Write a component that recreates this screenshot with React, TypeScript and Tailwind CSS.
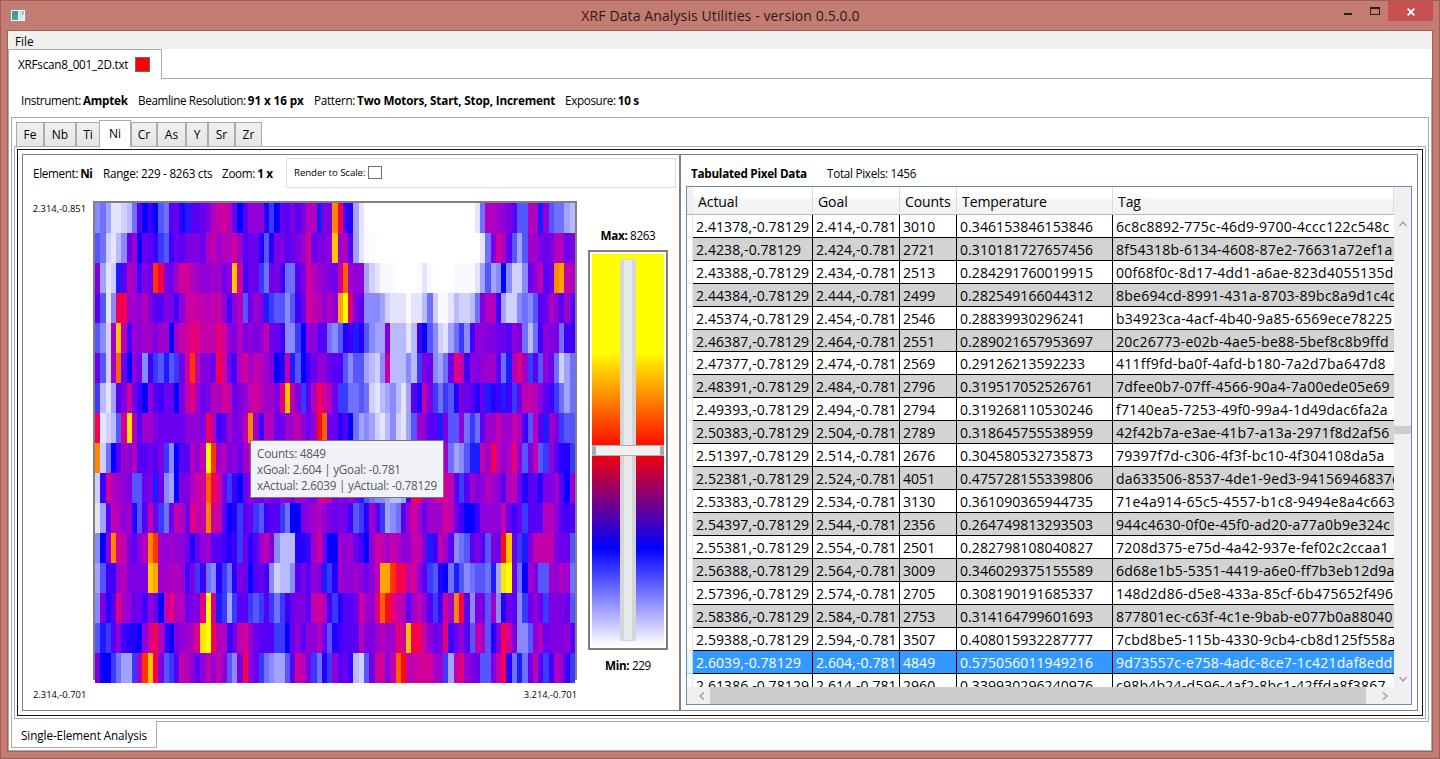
import React from "react";

const PALETTE: Record<string, string> = {
  "0": "#ffffff", "1": "#f9f9ff", "2": "#e4e4ff", "3": "#d0d0ff", "4": "#babaff",
  "5": "#a2a2ff", "6": "#8a8aff", "7": "#7070ff", "8": "#5656ff", "9": "#3a3aff",
  a: "#1c1cff", b: "#0400ff", c: "#2400ff", d: "#3e00fc", e: "#5600f6", f: "#6a00ee",
  g: "#7e00e2", h: "#9000d8", i: "#a000cc", j: "#b200bc", k: "#c200ac", l: "#d20098",
  m: "#e60078", n: "#f60050", o: "#ff0c10", p: "#ff3400", q: "#ff6000", r: "#ff8600",
  s: "#ffa400", t: "#ffc400", u: "#ffe400", v: "#ffff00",
};

/* One string per scan line, 91 pixels each, in groups of five. */
const SCAN = [
  "67522 347eb db87e fcaee fgjkl jfbeh hhc9b fegeg jjagg rndc5 20000 00000 00000 00000 0027j jihge 88jja h8775 4",
  "87324 6fibf ed98d feggg fjkij jlief fc8cg gefgi lfggh tije5 21100 00000 00000 00000 00027 glje8 58iig fgjjf g",
  "g523a ejidg fpngf illji hhiif htldf f97fg d77eg ljihg flqih h5321 11000 01210 00011 11258 56b63 36fhk efrsk j",
  "e826n niihj geegg dhklk kjkkh dhj8f iga98 868df lkjhj hsvmg e6665 32221 22473 11243 347gj jd533 6768e fjhei e",
  "863it kdihi igiib iklmm kkkml hgjgh ghkff d669b hhee7 68cda c8655 g4442 4db86 32579 6dhhg gffeh g747d hgg7d d",
  "f83iq fbhf6 d98a8 9flpk ggfnl fdjli kjigb cka8b dfhhf ee868 85436 k4446 49gf6 57fmk dhghi ie7aj mi9e8 hf735 7",
  "9425e glfdb hedff bgkmi fgjjl kfghk ljiig mtkg9 ejnlj f9977 87324 56425 eckg9 798cg fecfa cdad9 fkkjh ed975 7",
  "n2348 lujei igfff ffhhh gnjde iggkr idjjf fiikh fhoqf fceb7 56532 46325 8ihee ag88h 797ei ikiik jd8je aig98 8",
  "r37be ihjee feg96 beejh kvpij ghfik hgfhg ghigf hgihf ghgfh ighgf hghgi hghgf ki756 8aaki nkhjm h8gk8 9hecc 9",
  "3dlji hg88f gaf65 bggjk lqnlf 9dbfh gfhgf ihfjh gflmk ghgig a8766 5445d nniil llke9 eighj ihejk fceec ggieb i",
  "25ekj hic8e kf97f kjfmk krlke bc9ef 98dee 97bbg hijhg fgfd8 9cie9 567ei lifii ilkfd bbdhh hhkfd f9eee jjhed e",
  "6bhrl kgehj rpihi hhfcf hieed cd9fc eikg6 444cc dilfb bihif dbhlk ikjhh kkgad kie67 8ege8 gfotf 9agkk kkgff 8",
  "58ddi jgggg tsiij jidg9 d76c9 7cgfb efd63 446eg ehga9 cihhi hfhks spnnk lhe98 cb7a8 67887 a5uvf 7big8 8ihji 7",
  "6gcem ihffd hfbkm jjfgg mvla9 59ee9 89e97 9dfgg ekljd 9ceef lihmq omkje ikhe9 dlirn e6gg8 i6cfe 69fhf 9gggf 8",
  "8a9eh dccbh lnjdb ghijm uvnjj dfkli feee9 9bfhe hhjf8 cdeee jggij iimlt nnkhf gmdfh e8kj8 cgnlg 668hj fgggh e",
  "gbb97 559jp tng89 ekjhe hkhkh 86gnh f9765 58elj g97c9 hefd4 38fll gkqok kllli i95km hgf88 gknc7 a7fke 9djid 9",
].map((line) => line.replace(/ /g, "").split(""));

const ROWS: [string, string, string, string, string][] = [
  ["2.41378,-0.78129", "2.414,-0.781", "3010", "0.346153846153846", "6c8c8892-775c-46d9-9700-4ccc122c548c"],
  ["2.4238,-0.78129", "2.424,-0.781", "2721", "0.310181727657456", "8f54318b-6134-4608-87e2-76631a72ef1a"],
  ["2.43388,-0.78129", "2.434,-0.781", "2513", "0.284291760019915", "00f68f0c-8d17-4dd1-a6ae-823d4055135d"],
  ["2.44384,-0.78129", "2.444,-0.781", "2499", "0.282549166044312", "8be694cd-8991-431a-8703-89bc8a9d1c4d"],
  ["2.45374,-0.78129", "2.454,-0.781", "2546", "0.28839930296241", "b34923ca-4acf-4b40-9a85-6569ece78225"],
  ["2.46387,-0.78129", "2.464,-0.781", "2551", "0.289021657953697", "20c26773-e02b-4ae5-be88-5bef8c8b9ffd"],
  ["2.47377,-0.78129", "2.474,-0.781", "2569", "0.29126213592233", "411ff9fd-ba0f-4afd-b180-7a2d7ba647d8"],
  ["2.48391,-0.78129", "2.484,-0.781", "2796", "0.319517052526761", "7dfee0b7-07ff-4566-90a4-7a00ede05e69"],
  ["2.49393,-0.78129", "2.494,-0.781", "2794", "0.319268110530246", "f7140ea5-7253-49f0-99a4-1d49dac6fa2a"],
  ["2.50383,-0.78129", "2.504,-0.781", "2789", "0.318645755538959", "42f42b7a-e3ae-41b7-a13a-2971f8d2af56"],
  ["2.51397,-0.78129", "2.514,-0.781", "2676", "0.304580532735873", "79397f7d-c306-4f3f-bc10-4f304108da5a"],
  ["2.52381,-0.78129", "2.524,-0.781", "4051", "0.475728155339806", "da633506-8537-4de1-9ed3-94156946837c"],
  ["2.53383,-0.78129", "2.534,-0.781", "3130", "0.361090365944735", "71e4a914-65c5-4557-b1c8-9494e8a4c663"],
  ["2.54397,-0.78129", "2.544,-0.781", "2356", "0.264749813293503", "944c4630-0f0e-45f0-ad20-a77a0b9e324c"],
  ["2.55381,-0.78129", "2.554,-0.781", "2501", "0.282798108040827", "7208d375-e75d-4a42-937e-fef02c2ccaa1"],
  ["2.56388,-0.78129", "2.564,-0.781", "3009", "0.346029375155589", "6d68e1b5-5351-4419-a6e0-ff7b3eb12d9a"],
  ["2.57396,-0.78129", "2.574,-0.781", "2705", "0.308190191685337", "148d2d86-d5e8-433a-85cf-6b475652f496"],
  ["2.58386,-0.78129", "2.584,-0.781", "2753", "0.314164799601693", "877801ec-c63f-4c1e-9bab-e077b0a88040"],
  ["2.59388,-0.78129", "2.594,-0.781", "3507", "0.408015932287777", "7cbd8be5-115b-4330-9cb4-cb8d125f558a"],
  ["2.6039,-0.78129", "2.604,-0.781", "4849", "0.575056011949216", "9d73557c-e758-4adc-8ce7-1c421daf8edd"],
  ["2.61386,-0.78129", "2.614,-0.781", "2960", "0.339930296240976", "c98b4b24-d596-4af2-8bc1-42ffda8f3867"],
];

const COLUMNS = [
  { name: "Actual", width: "w-[120px]", spacing: "tracking-[0.1px]" },
  { name: "Goal", width: "w-[87px]", spacing: "tracking-[0.1px]" },
  { name: "Counts", width: "w-[57px]", spacing: "tracking-[0.05px]" },
  { name: "Temperature", width: "w-[156px]", spacing: "tracking-[0.08px]" },
  { name: "Tag", width: "w-[281px]", spacing: "tracking-[0.25px]" },
];

const ELEMENTS = [
  { name: "Fe", width: "w-[28px]" },
  { name: "Nb", width: "w-[32px]" },
  { name: "Ti", width: "w-[24px]" },
  { name: "Ni", width: "w-[32px]", selected: true },
  { name: "Cr", width: "w-[26px]" },
  { name: "As", width: "w-[29px]" },
  { name: "Y", width: "w-[22px]" },
  { name: "Sr", width: "w-[27px]" },
  { name: "Zr", width: "w-[27px]" },
];

function Field({ label, value, className = "", valueClass = "" }: { label: string; value: string; className?: string; valueClass?: string }) {
  return (
    <span className={"flex shrink-0 gap-[2px] whitespace-nowrap " + className}>
      <span>{label}</span>
      <b className={"font-bold " + valueClass}>{value}</b>
    </span>
  );
}

function TitleBar() {
  return (
    <header className="flex h-[29px] shrink-0 items-start">
      <svg className="ml-[9px] mt-[8px]" width="16" height="13" viewBox="0 0 16 13">
        <rect x="0.5" y="0.5" width="15" height="12" fill="#f4f6f6" stroke="#8f9496" />
        <rect x="2" y="2" width="6" height="9" fill="#4a8f9c" />
        <rect x="2" y="6" width="6" height="5" fill="#4fa08a" />
        <rect x="9" y="2" width="3" height="9" fill="#dcdcdc" />
        <rect x="12" y="2" width="2" height="4" fill="#8ec9d6" />
        <rect x="12" y="6" width="2" height="5" fill="#e8ecec" />
      </svg>
      <h1 className="flex-1 pl-[71px] pt-[5px] text-center text-[14px] leading-[20px] tracking-[0.11px] text-[#2a1a18]">
        XRF Data Analysis Utilities - version 0.5.0.0
      </h1>
      <svg className="mt-[6px]" width="44" height="12" viewBox="0 0 44 12">
        <rect x="0" y="6" width="8" height="2" fill="#222" />
        <path d="M26 0h10v8H26zM27 2v5h8V2z" fill="#222" fillRule="evenodd" />
      </svg>
      <div className="mr-[6px] flex h-[20px] w-[45px] items-center justify-center bg-[#c75050]">
        <svg className="mt-[2px]" width="8" height="8" viewBox="0 0 8 8">
          <path d="M0.7 0.7l6.6 6.6M7.3 0.7l-6.6 6.6" stroke="#fff" strokeWidth="1.8" />
        </svg>
      </div>
    </header>
  );
}

function HeatMap() {
  return (
    <div className="relative h-[482px] w-[484px] border-2 border-b-0 border-[#808080]">
      <div className="absolute bottom-0 left-[-2px] h-[3px] w-[2px] bg-white" />
      <div className="absolute bottom-0 right-[-2px] h-[3px] w-[2px] bg-white" />
      <svg width="480" height="480" viewBox="0 0 91 16" preserveAspectRatio="none" shapeRendering="crispEdges">
        {SCAN.map((line, y) =>
          line.map((c, x) => <rect key={x + "-" + y} x={x} y={y} width="1" height="1" fill={PALETTE[c]} />)
        )}
      </svg>
      <div className="absolute left-[155px] top-[237px] h-[58px] w-[194px] border border-[#767676] bg-[#f1f2f7] pl-[6px] pt-[4px] text-[11.7px] leading-[16px] tracking-[-0.22px] text-[#575757]">
        <p>Counts: 4849</p>
        <p>xGoal: 2.604 | yGoal: -0.781</p>
        <p>xActual: 2.6039 | yActual: -0.78129</p>
      </div>
    </div>
  );
}

function Legend() {
  return (
    <div className="ml-[11px] flex w-[80px] flex-col items-center pt-[26px] leading-[16px]">
      <p className="tracking-[-0.35px]"><b>Max:</b> 8263</p>
      <div className="mt-[7px] h-[400px] w-[80px] shrink-0 border-2 border-[#808080] p-[2px]">
        <div className="relative flex h-full justify-center bg-[linear-gradient(to_bottom,#ff0_0%,#ff0_25%,#f00_50%,#00f_75%,#fff_100%)] pb-[5px] pt-[5px]">
          <div className="w-[16px] border-x-4 border-y border-[#d6d6d6] bg-[#e7eaea]" />
          <div className="absolute left-0 top-[191px] h-[11px] w-full border-x-4 border-y border-[#acacac] bg-[#f0f0f0]" />
        </div>
      </div>
      <p className="mt-[7px] tracking-[-0.35px]"><b>Min:</b> 229</p>
    </div>
  );
}

function PixelMapPanel() {
  return (
    <section className="flex w-[656px] shrink-0 flex-col">
      <div className="flex h-[33px] items-center pl-[10px] pt-[3px]">
        <Field label="Element:" value="Ni" className="w-[70px] pt-px tracking-[-0.33px]" />
        <span className="w-[119px] shrink-0 pt-px tracking-[-0.26px]">Range: 229 - 8263 cts</span>
        <Field label="Zoom:" value="1 x" className="w-[64px] pt-px tracking-[-0.3px]" />
        <div className="flex h-[30px] w-[390px] items-center border border-[#dcdcdc] pl-[7px]">
          <span className="pt-px text-[9.6px] tracking-[-0.04px]">Render to Scale:</span>
          <span className="mb-px ml-[3px] h-[13px] w-[14px] border border-[#707070] bg-white" />
        </div>
      </div>
      <div className="mt-[13px] flex">
        <span className="ml-[3px] w-[60px] shrink-0 self-start whitespace-nowrap pt-[1px] text-right text-[9.4px] leading-[14px]">2.314,-0.851</span>
        <div className="ml-[7px]"><HeatMap /></div>
        <Legend />
      </div>
      <div className="flex w-[554px] justify-between pl-[10px] pt-[5px] text-[9.4px] leading-[14px]">
        <span>2.314,-0.701</span>
        <span>3.214,-0.701</span>
      </div>
    </section>
  );
}

function Chevron({ d, className = "" }: { d: string; className?: string }) {
  return (
    <svg className={className} width="8" height="8" viewBox="0 0 8 8" fill="none">
      <path d={d} stroke="#a0a0a0" strokeWidth="1.4" />
    </svg>
  );
}

function PixelTable() {
  return (
    <div className="flex h-[519px] w-[726px] flex-col border border-[#688caf] bg-white text-[14px]">
      <div className="flex h-[500px]">
        <div className="flex h-[500px] w-[707px] shrink-0 flex-col overflow-hidden">
          <div className="flex h-[28px] shrink-0 border-b border-[#b8b8b8] bg-[linear-gradient(to_bottom,#fff_0%,#fff_38%,#f5f6f8_42%,#f1f3f5_100%)]">
            <div className="w-[6px] shrink-0 bg-[#f0f0f0]" />
            {COLUMNS.map((c) => (
              <div key={c.name} className={c.width + " shrink-0 border-r border-[#dcdcdf] pl-[5px] leading-[29px] tracking-[-0.08px]"}>
                {c.name}
              </div>
            ))}
          </div>
          {ROWS.map((row, i) => {
            const tone = i === 19 ? "bg-[#3399ff] text-white" : i % 2 ? "bg-[#d3d3d3]" : "bg-white";
            return (
              <div key={row[4]} className={"flex shrink-0 " + (i === 5 ? "h-[22px]" : "h-[23px]")}>
                <div className={"w-[6px] shrink-0 border-b border-r " + (i === 19 ? "border-[#a8d8f8] bg-[#e8f5fd]" : "border-[#e4e4e4] bg-white")} />
                {row.map((cell, j) => (
                  <div
                    key={j}
                    className={[
                      COLUMNS[j].width,
                      COLUMNS[j].spacing,
                      tone,
                      j < 4 ? "border-r" : "",
                      "shrink-0 overflow-hidden whitespace-nowrap border-b border-black pl-[3px] leading-[23px]",
                    ].join(" ")}
                  >
                    {cell}
                  </div>
                ))}
              </div>
            );
          })}
        </div>
        <div className="flex w-[17px] flex-col items-center bg-[#f0f0f0] pt-[33px]">
          <Chevron d="M0.5 6l3.5-4 3.5 4" />
          <div className="mt-[198px] h-[8px] w-full bg-[#cdcdcd]" />
          <Chevron className="mt-[241px]" d="M0.5 2l3.5 4 3.5-4" />
        </div>
      </div>
      <div className="flex h-[17px] items-center bg-[#f0f0f0]">
        <Chevron className="ml-[11px]" d="M6 0.5l-4 3.5 4 3.5" />
        <div className="ml-[4px] h-full w-[656px] bg-[#cdcdcd]" />
        <Chevron className="ml-[15px]" d="M2 0.5l4 3.5-4 3.5" />
      </div>
    </div>
  );
}

function TablePanel() {
  return (
    <section className="flex flex-1 flex-col border-l-2 border-[#808080] pl-[5px]">
      <div className="flex h-[31px] items-center pl-[5px] pt-[7px]">
        <b className="w-[136px] tracking-[-0.26px]">Tabulated Pixel Data</b>
        <span className="tracking-[-0.28px]">Total Pixels: 1456</span>
      </div>
      <PixelTable />
    </section>
  );
}

export default function App() {
  return (
    <div className="flex h-[759px] w-[1440px] flex-col overflow-hidden border border-[#9b5f58] bg-[#c47b72] font-['Open_Sans','Noto_Sans',sans-serif] text-[11.7px] text-black">
      <TitleBar />
      <main className="mx-[6px] flex h-[722px] w-[1426px] flex-col border border-[#a0625b] bg-white">
        <nav className="h-[18px] shrink-0 bg-[#f0f0f0] pl-[7px] leading-[20px]">File</nav>
        <div className="relative z-10 -mb-px flex h-[30px] w-[154px] shrink-0 items-center border border-b-0 border-[#acacac] bg-white pl-[9px]">
          <span className="w-[117px] tracking-[-0.22px]">XRFscan8_001_2D.txt</span>
          <span className="mb-px h-[15px] w-[15px] border border-[#6b6b6b] bg-[#f00]" />
        </div>
        <div className="flex min-h-0 flex-1 flex-col border border-[#acacac] px-[2px]">
          <div className="flex h-[38px] shrink-0 items-center pl-[10px] pt-[5px]">
            <Field label="Instrument:" value="Amptek" className="w-[117px] tracking-[-0.36px]" valueClass="tracking-[-0.24px]" />
            <Field label="Beamline Resolution:" value="91 x 16 px" className="w-[176px] tracking-[-0.36px]" valueClass="tracking-[-0.08px]" />
            <Field label="Pattern:" value="Two Motors, Start, Stop, Increment" className="w-[251px] tracking-[-0.3px]" valueClass="tracking-[-0.17px]" />
            <Field label="Exposure:" value="10 s" className="tracking-[-0.35px]" />
          </div>
          <div className="flex h-[605px] shrink-0 flex-col border border-[#acacac] px-[2px]">
            <div className="relative z-10 -mb-px flex h-[29px] shrink-0 items-end pl-[2px] text-[12px]">
              {ELEMENTS.map((e) =>
                e.selected ? (
                  <div key={e.name} className={e.width + " -ml-px h-[27px] shrink-0 border border-b-0 border-[#acacac] bg-white text-center leading-[26px]"}>
                    {e.name}
                  </div>
                ) : (
                  <div key={e.name} className={e.width + " mb-px h-[24px] shrink-0 border border-b-0 border-[#acacac] bg-[linear-gradient(to_bottom,#f0f0f0,#e5e5e5)] text-center leading-[24px]"}>
                    {e.name}
                  </div>
                )
              )}
            </div>
            <div className="h-[573px] shrink-0 border border-[#acacac] p-[2px]">
              <div className="h-[567px] border border-[#141414] p-[4px]">
                <div className="flex h-[557px] border border-[#808080]">
                  <PixelMapPanel />
                  <TablePanel />
                </div>
              </div>
            </div>
          </div>
          <div className="relative z-10 -mt-px h-[27px] w-[146px] shrink-0 border border-t-0 border-[#acacac] bg-white pl-[9px] leading-[29px] tracking-[-0.08px]">
            Single-Element Analysis
          </div>
        </div>
      </main>
    </div>
  );
}
